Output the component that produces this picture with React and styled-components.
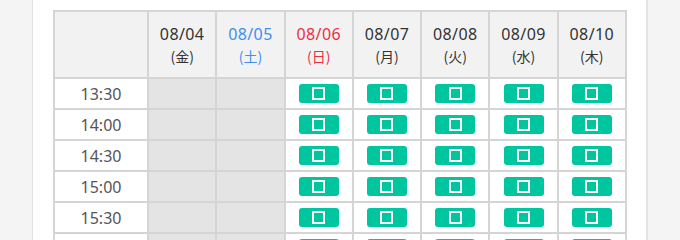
import React from 'react'
import styled, { createGlobalStyle } from 'styled-components'

const GlobalStyle = createGlobalStyle`
    html, body {
        margin: 0;
        padding: 0;
        background: #f4f4f4;
        font-family: "Noto Sans", "Noto Sans CJK JP", sans-serif;
    }
`

const days = [
    { date: '08/04', wd: '金', type: 'closed' },
    { date: '08/05', wd: '土', type: 'sat' },
    { date: '08/06', wd: '日', type: 'sun' },
    { date: '08/07', wd: '月' },
    { date: '08/08', wd: '火' },
    { date: '08/09', wd: '水' },
    { date: '08/10', wd: '木' },
]

const times = ['13:30', '14:00', '14:30', '15:00', '15:30', '16:00']

const dayColor = { sat: '#3f8fef', sun: '#ea2f45' }

const App = () => {
    return (
        <>
            <GlobalStyle />
            <Page>
                <Panel>
                    <Table>
                        <colgroup>
                            <col style={{ width: 94 }} />
                            {days.map((d) => <col key={d.date} />)}
                        </colgroup>
                        <thead>
                            <tr>
                                <HeadCell />
                                {days.map((d) => (
                                    <HeadCell key={d.date} $color={dayColor[d.type]}>
                                        <DateText>{d.date}</DateText>
                                        <WeekText>({d.wd})</WeekText>
                                    </HeadCell>
                                ))}
                            </tr>
                        </thead>
                        <tbody>
                            {times.map((t) => (
                                <tr key={t}>
                                    <TimeCell>{t}</TimeCell>
                                    {days.map((d, i) => (
                                        i < 2
                                            ? <SlotCell key={d.date} $disabled />
                                            : <SlotCell key={d.date}>
                                                <SlotButton><Square /></SlotButton>
                                            </SlotCell>
                                    ))}
                                </tr>
                            ))}
                        </tbody>
                    </Table>
                </Panel>
            </Page>
        </>
    )
}

const Page = styled.div`
    width: 680px;
    height: 240px;
    overflow: hidden;
    padding-left: 32px;
    box-sizing: border-box;
`

const Panel = styled.div`
    width: 616px;
    height: 260px;
    background: #fff;
    border-left: 1px solid #e2e2e2;
    border-right: 2px solid #e4e4e4;
    box-sizing: border-box;
    padding: 10px 19px 0 20px;
`

const Table = styled.table`
    width: 574px;
    border-collapse: collapse;
    table-layout: fixed;
`

const HeadCell = styled.th`
    height: 65px;
    padding: 0;
    background: #f2f2f2;
    border: 2px solid #d5d5d5;
    color: ${(p) => p.$color || '#333'};
    font-weight: 400;
    text-align: center;
    vertical-align: middle;
`

const DateText = styled.div`
    font-size: 16px;
    line-height: 22px;
    letter-spacing: 0.4px;
`

const WeekText = styled.div`
    font-family: "Noto Sans CJK JP", sans-serif;
    font-size: 14px;
    line-height: 22px;
`

const TimeCell = styled.td`
    height: 29px;
    padding: 0;
    border: 2px solid #d5d5d5;
    color: #555;
    font-size: 16px;
    line-height: 20px;
    text-align: center;
    vertical-align: middle;
`

const SlotCell = styled.td`
    height: 29px;
    padding: 0;
    border: 2px solid #d5d5d5;
    background: ${(p) => (p.$disabled ? '#e4e4e4' : '#fff')};
    text-align: center;
    vertical-align: middle;
`

const SlotButton = styled.div`
    width: 40px;
    height: 19px;
    margin: 0 auto;
    border-radius: 3px;
    background: #00c6a0;
    display: flex;
    align-items: center;
    justify-content: center;
`

const Square = styled.span`
    width: 13px;
    height: 13px;
    border: 2px solid #fff;
    box-sizing: border-box;
`

export default App
